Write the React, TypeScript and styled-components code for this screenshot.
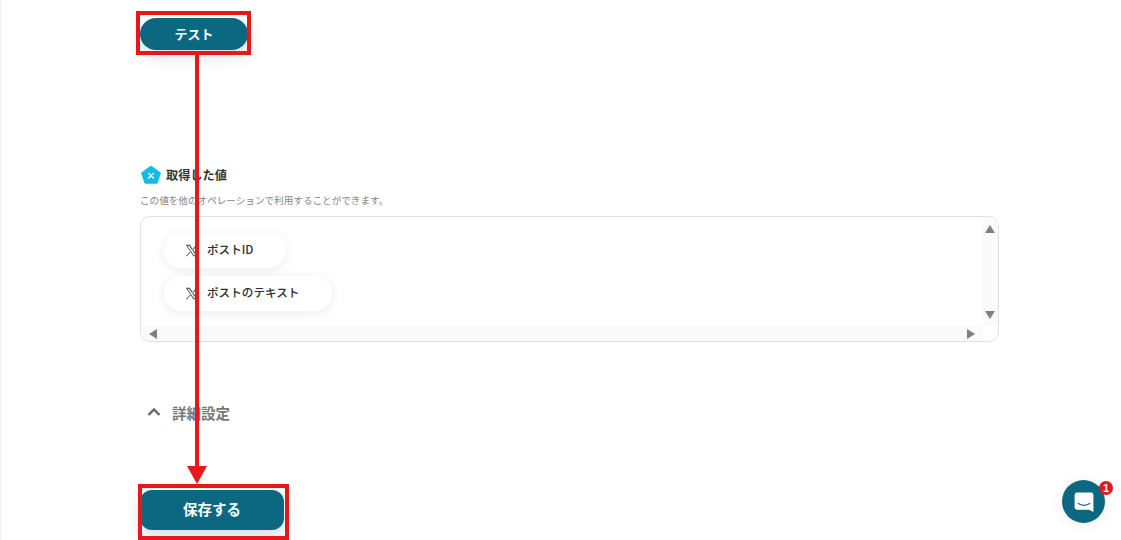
import React from 'react'
import styled, { createGlobalStyle } from 'styled-components'

const GlobalStyle = createGlobalStyle`
  html, body {
    margin: 0;
    padding: 0;
    background: #fff;
    overflow: hidden;
  }
  body {
    font-family: 'Noto Sans CJK JP', 'Noto Sans', sans-serif;
  }
`

const XLogo = () => (
  <XIcon viewBox="0 0 24 24">
    <path
      d="M1.5 1.5h7.4l14 21h-7.4z M4.4 3.1l11.9 17.8h3.3L7.7 3.1z M21 1.5l-7.8 8.9 1 1.4 9.1-10.3z M10.4 13.3l-9 9.2h1.9l8.1-8z"
      fill="#444"
      fillRule="evenodd"
    />
  </XIcon>
)

const ValueChip = ({ label }: { label: string }) => (
  <Chip>
    <XLogo />
    <span>{label}</span>
  </Chip>
)

const App = () => {
  return (
    <>
      <GlobalStyle />
      <Page>
        <TestButton>テスト</TestButton>

        <ValuesHeading>
          <svg width="20" height="20" viewBox="0 0 20 20">
            <path d="M10 .6 19.3 7.2c.5.3.6.8.5 1.3l-3.2 9.5c-.2.5-.6.8-1.1.8H4.5c-.5 0-.9-.3-1.1-.8L.2 8.5c-.1-.5 0-1 .5-1.3z" fill="#12bce8" />
            <path d="M7.6 8.4 12.4 13M12.4 8.4 7.6 13" stroke="#fff" strokeWidth="1.3" strokeLinecap="round" />
          </svg>
          <span>取得した値</span>
        </ValuesHeading>
        <Hint>この値を他のオペレーションで利用することができます。</Hint>

        <ValuesBox>
          <ChipList>
            <ValueChip label="ポストID" />
            <ValueChip label="ポストのテキスト" />
          </ChipList>
          <VerticalTrack>
            <Arrow $dir="up" />
            <Arrow $dir="down" />
          </VerticalTrack>
          <HorizontalTrack>
            <Arrow $dir="left" />
            <Arrow $dir="right" />
          </HorizontalTrack>
        </ValuesBox>

        <Details>
          <svg width="16" height="16" viewBox="0 0 16 16">
            <path d="M2.5 11 8 5.5 13.5 11" fill="none" stroke="#666" strokeWidth="2.4" />
          </svg>
          <span>詳細設定</span>
        </Details>

        <SaveButton>保存する</SaveButton>
      </Page>

      {/* annotations drawn over the screenshot */}
      <Highlight $left={136} $top={11} $width={115} $height={44} />
      <Highlight $left={138} $top={484} $width={151} $height={56} />
      <ArrowOverlay width="24" height="432" viewBox="0 0 24 432">
        <path d="M10 0h4v414h-4z" fill="#e8171b" />
        <path d="M2 412h20l-10 18z" fill="#e8171b" />
      </ArrowOverlay>

      <ChatBubble>
        <svg width="20" height="22" viewBox="0 0 20 22">
          <path d="M3 1.5h14A2.4 2.4 0 0 1 19.4 3.9V21l-4.4-2.2H3A2.4 2.4 0 0 1 .6 16.4V3.9A2.4 2.4 0 0 1 3 1.5z" fill="#fff" />
          <path d="M4.2 12.6c3.4 2 8.2 2 11.6 0" fill="none" stroke="#0b6880" strokeWidth="1.2" strokeLinecap="round" />
        </svg>
        <Badge>1</Badge>
      </ChatBubble>
    </>
  )
}

export default App

const Page = styled.div`
  box-sizing: border-box;
  width: 1121px;
  height: 540px;
  padding: 18px 0 0 140px;
  border-left: 1px solid #f1f1f1;
  display: flex;
  flex-direction: column;
  align-items: flex-start;
  overflow: hidden;
`

const PrimaryButton = styled.div`
  display: flex;
  align-items: center;
  justify-content: center;
  box-sizing: border-box;
  padding-bottom: 3px;
  background: #0b6880;
  color: #fff;
  font-weight: 700;
  margin-left: -1px;
  box-shadow: 0 6px 16px rgba(40, 60, 90, 0.18);
`

const TestButton = styled(PrimaryButton)`
  width: 108px;
  height: 32px;
  border-radius: 16px;
  font-size: 13px;
  padding-bottom: 2px;
`

const SaveButton = styled(PrimaryButton)`
  width: 144px;
  height: 40px;
  border-radius: 12px;
  font-size: 14.5px;
  margin-top: 65px;
`

const ValuesHeading = styled.div`
  display: flex;
  align-items: center;
  gap: 5px;
  height: 20px;
  margin-top: 115px;
  font-size: 12.2px;
  font-weight: 700;
  line-height: 20px;
  color: #333;
`

const Hint = styled.div`
  margin-top: 8px;
  margin-left: -1px;
  font-size: 9.6px;
  line-height: 14px;
  color: #858585;
  white-space: nowrap;
`

const ValuesBox = styled.div`
  position: relative;
  box-sizing: border-box;
  width: 859px;
  height: 126px;
  margin-top: 9px;
  margin-left: -1px;
  border: 1px solid #e2e2e2;
  border-radius: 10px;
  overflow: hidden;
`

const ChipList = styled.div`
  display: flex;
  flex-direction: column;
  align-items: flex-start;
  gap: 8px;
  padding: 16px 0 0 23px;
`

const Chip = styled.div`
  display: flex;
  align-items: center;
  box-sizing: border-box;
  height: 35px;
  padding: 0 33px 3px 21px;
  background: #fff;
  border-radius: 18px;
  box-shadow: 0 2px 12px rgba(0, 0, 0, 0.08);
  font-size: 11.6px;
  font-weight: 500;
  color: #2e2e2e;
`

const XIcon = styled.svg`
  width: 13px;
  height: 13px;
  margin: 3px 9px 0 0;
  flex: none;
`

const VerticalTrack = styled.div`
  position: absolute;
  top: 0;
  right: 0;
  bottom: 15px;
  width: 15px;
  background: #fafafa;
  display: flex;
  flex-direction: column;
  align-items: center;
  justify-content: space-between;
  padding: 8px 1px 7px 0;
  box-sizing: border-box;
`

const HorizontalTrack = styled.div`
  position: absolute;
  left: 0;
  right: 15px;
  bottom: 0;
  height: 15px;
  background: #fafafa;
  display: flex;
  align-items: center;
  justify-content: space-between;
  padding: 0 8px;
  box-sizing: border-box;
`

const Arrow = styled.i<{ $dir: 'up' | 'down' | 'left' | 'right' }>`
  display: block;
  width: 0;
  height: 0;
  border-style: solid;
  border-color: transparent;
  ${p => p.$dir === 'up' && 'border-width: 0 5px 8px; border-bottom-color: #808080;'}
  ${p => p.$dir === 'down' && 'border-width: 8px 5px 0; border-top-color: #808080;'}
  ${p => p.$dir === 'left' && 'border-width: 5px 8px 5px 0; border-right-color: #808080;'}
  ${p => p.$dir === 'right' && 'border-width: 5px 0 5px 8px; border-left-color: #808080;'}
`

const Details = styled.div`
  display: flex;
  align-items: center;
  gap: 10px;
  margin-top: 59px;
  margin-left: 5px;
  height: 24px;
  padding-bottom: 2px;
  box-sizing: border-box;
  font-size: 14.5px;
  font-weight: 700;
  color: #777;
`

const Highlight = styled.div<{ $left: number; $top: number; $width: number; $height: number }>`
  position: absolute;
  box-sizing: border-box;
  left: ${p => p.$left}px;
  top: ${p => p.$top}px;
  width: ${p => p.$width}px;
  height: ${p => p.$height}px;
  border: 4px solid #e8171b;
`

const ArrowOverlay = styled.svg`
  position: absolute;
  left: 185px;
  top: 54px;
`

const ChatBubble = styled.div`
  position: absolute;
  left: 1062px;
  top: 480px;
  width: 43px;
  height: 43px;
  border-radius: 50%;
  background: #0b6880;
  display: flex;
  align-items: center;
  justify-content: center;
  box-shadow: 0 2px 14px rgba(0, 0, 0, 0.08);
`

const Badge = styled.div`
  position: absolute;
  top: 1px;
  right: -8px;
  width: 14px;
  height: 14px;
  border-radius: 50%;
  background: #e0191f;
  color: #fff;
  font-family: 'Liberation Sans', sans-serif;
  font-size: 11px;
  font-weight: 700;
  line-height: 14px;
  text-align: center;
`
